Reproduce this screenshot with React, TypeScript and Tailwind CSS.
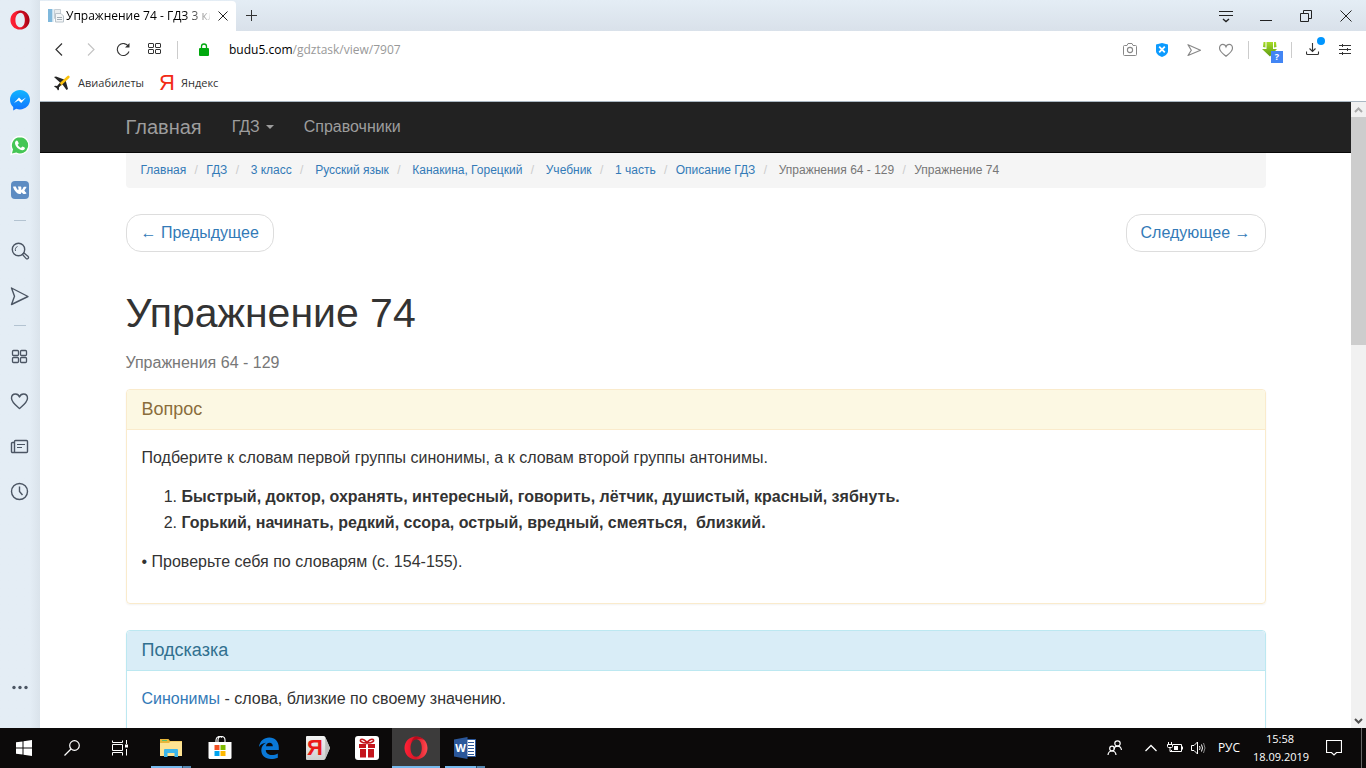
import type { ReactNode } from "react";

type IconProps = { w: number; h: number; children: ReactNode; className?: string };

function Icon({ w, h, children, className = "" }: IconProps) {
  return (
    <svg
      width={w}
      height={h}
      viewBox={`0 0 ${w} ${h}`}
      fill="none"
      stroke="currentColor"
      aria-hidden="true"
      className={`block shrink-0 ${className}`}
    >
      {children}
    </svg>
  );
}

function OperaLogo({ size, id, glossy = false }: { size: number; id: string; glossy?: boolean }) {
  return (
    <svg width={size} height={size} viewBox="0 0 24 24" aria-hidden="true" className="block">
      <defs>
        <linearGradient id={id} x1="0" y1="0" x2="1" y2="0">
          <stop offset="0" stopColor="#ff2136" />
          <stop offset="0.5" stopColor={glossy ? "#d81626" : "#f0182c"} />
          <stop offset="1" stopColor={glossy ? "#ff4a50" : "#a00012"} />
        </linearGradient>
      </defs>
      <path
        fillRule="evenodd"
        fill={`url(#${id})`}
        d="M12 0.5C5.4 0.5 0.500 5.600 0.500 12S5.400 23.500 12 23.500 23.500 18.400 23.500 12 18.600 0.500 12 0.500ZM12.300 3.200C15.700 3.200 17.800 7 17.800 12S15.700 20.800 12.300 20.800 6.500 17 6.500 12 8.900 3.200 12.300 3.200Z"
      />
      <path fill="#a30014" opacity="0.6" d="M12 0.500C15.500 0.500 18.600 2 20.600 4.300 18 2.900 15 2.600 12.300 3.200 10 3.600 8.300 5 7.300 7 8 3.500 9.500 1.200 12 0.500Z" />
    </svg>
  );
}

type Item = { label: string; icon: ReactNode };

const messengers: Item[] = [
  {
    label: "Messenger",
    icon: (
      <Icon w={20} h={21}>
        <defs>
          <linearGradient id="msg" x1="0" y1="0" x2="0" y2="1">
            <stop offset="0" stopColor="#10b5ff" />
            <stop offset="1" stopColor="#1173ff" />
          </linearGradient>
        </defs>
        <path
          fill="url(#msg)"
          stroke="none"
          d="M10 0C4.400 0 0 4.300 0 9.800c0 2.800 1.200 5.400 3.200 7.200V20.500l3-1.700c1.200.4 2.500.6 3.800.6 5.600 0 10-4.100 10-9.600S15.600 0 10 0Z"
        />
        <path fill="#fff" stroke="none" d="M4 13 9 7.500l2.700 2.700L16 7.500 11.200 13 8.500 10.400Z" />
      </Icon>
    ),
  },
  {
    label: "WhatsApp",
    icon: (
      <Icon w={20} h={21}>
        <path
          fill="#45c655"
          stroke="#fff"
          strokeWidth="1.300"
          d="M10 1.500a8.800 8.800 0 0 0-7.700 13L1 19.500l5.100-1.300A8.800 8.800 0 1 0 10 1.500Z"
        />
        <path
          fill="#fff"
          stroke="none"
          d="M7 5.500c-.6-.2-2 .8-2 2.500 0 3.300 4.200 7.300 7.400 7.300 1.500 0 2.800-1.200 2.500-2.300-.1-.5-2-1.500-2.500-1.500s-.9 1.300-1.400 1.300c-.9 0-3.300-2.200-3.300-3 0-.4 1-.8 1-1.400C8.700 7.900 7.600 5.700 7 5.500Z"
        />
      </Icon>
    ),
  },
  {
    label: "ВКонтакте",
    icon: (
      <Icon w={20} h={21}>
        <rect x="1" y="1" width="18" height="18" rx="4" fill="#5d8cc2" stroke="none" />
        <path
          fill="#fff"
          stroke="none"
          d="M9.600 14h.9c.5-.1.400-.500.500-1.100.2-1 1-.3 1.700.500.6.600.900.700 2.100.600 2 0 2-.5 1-1.700-.8-.9-1.600-1.500-1.300-2 .3-.6 1.800-2.400 1.900-3.100.1-.4-.1-.5-.5-.5h-1.800c-.9 0-.6 1.300-2 2.900-.5.500-.8.300-.8-.3V7.500c0-.7-.3-.9-1-.9H8.700c-.8 0-1 .4-.7.700.4.300.5.600.5 1.500 0 1-.1 1.300-.5 1.100C7.200 9.500 6.400 7.900 6 7c-.1-.3-.3-.4-.7-.4H3.600c-.5 0-.7.2-.5.700.8 2 3.200 6.700 6.500 6.700Z"
        />
      </Icon>
    ),
  },
];

const tools: Item[] = [
  {
    label: "Поиск",
    icon: (
      <Icon w={20} h={21}>
        <circle cx="8.500" cy="9.500" r="6.200" strokeWidth="1.400" />
        <path d="M5.500 11c-.6-1.800.1-3.800 2-4.500" />
        <path strokeWidth="1.300" d="m12.500 14.500 1.500-1.500 4.200 3.600a1.200 1.200 0 0 1 0 1.700l-.3.300a1.200 1.200 0 0 1-1.700 0Z" />
      </Icon>
    ),
  },
  {
    label: "Моя лента",
    icon: (
      <Icon w={20} h={21}>
        <path strokeWidth="1.400" strokeLinejoin="round" d="M1.500 3 18 11.500 1.500 19.500 4.500 11.300Z" />
      </Icon>
    ),
  },
];

const panels: Item[] = [
  {
    label: "Экспресс-панель",
    icon: (
      <Icon w={20} h={21}>
        <g strokeWidth="1.300">
          <rect x="2.500" y="5.500" width="6" height="5" rx="1" />
          <rect x="10.500" y="5.500" width="6" height="5" rx="1" />
          <rect x="2.500" y="12.500" width="6" height="5" rx="1" />
          <rect x="10.500" y="12.500" width="6" height="5" rx="1" />
        </g>
      </Icon>
    ),
  },
  {
    label: "Закладки",
    icon: (
      <Icon w={20} h={21}>
        <path
          strokeWidth="1.400"
          strokeLinejoin="round"
          d="M9.500 18.500C6 15.600 1.500 12.300 1.500 8.300 1.500 5.700 3.300 4 5.500 4c1.700 0 3.300 1 4 3 .7-2 2.300-3 4-3 2.200 0 4 1.700 4 4.300 0 4-4.500 7.300-8 10.200Z"
        />
      </Icon>
    ),
  },
  {
    label: "Новости",
    icon: (
      <Icon w={20} h={21}>
        <path strokeWidth="1.400" d="M4.500 17.500V6.500a1 1 0 0 1 1-1h11a1 1 0 0 1 1 1v10a1 1 0 0 1-1 1H2.500a1 1 0 0 1-1-1v-8a1 1 0 0 1 1-1h2" />
        <path strokeWidth="1.200" d="M7 9.500h8M7 12.500h5" />
      </Icon>
    ),
  },
  {
    label: "История",
    icon: (
      <Icon w={20} h={21}>
        <circle cx="9.500" cy="11.500" r="8" strokeWidth="1.400" />
        <path strokeWidth="1.400" d="M9.500 6.500v5l3 3.500" />
      </Icon>
    ),
  },
];

function SideButton({ item }: { item: Item }) {
  return (
    <button type="button" aria-label={item.label} className="flex h-[45px] w-full items-center justify-center text-[#4b5563]">
      {item.icon}
    </button>
  );
}

function SideRule() {
  return (
    <div className="flex h-[15px] w-full items-center justify-center">
      <span className="h-px w-3 bg-[#b3c3d1]" />
    </div>
  );
}

function Sidebar() {
  return (
    <aside className="flex w-10 shrink-0 flex-col items-center bg-linear-to-r from-[#e4edf5] from-75% to-[#dae3eb]">
      <button type="button" aria-label="Меню Opera" className="flex h-10 w-full items-center justify-center">
        <OperaLogo size={20} id="opera-side" />
      </button>
      <nav aria-label="Боковая панель" className="flex w-full flex-1 flex-col pt-[38px] pb-[18px]">
        {messengers.map((item) => (
          <SideButton key={item.label} item={item} />
        ))}
        <SideRule />
        {tools.map((item) => (
          <SideButton key={item.label} item={item} />
        ))}
        <SideRule />
        {panels.map((item) => (
          <SideButton key={item.label} item={item} />
        ))}
        <div className="mt-auto">
          <SideButton
            item={{
              label: "Настройка боковой панели",
              icon: (
                <Icon w={20} h={5}>
                  <g fill="currentColor" stroke="none">
                    <circle cx="4" cy="2.500" r="1.700" />
                    <circle cx="10" cy="2.500" r="1.700" />
                    <circle cx="16" cy="2.500" r="1.700" />
                  </g>
                </Icon>
              ),
            }}
          />
        </div>
      </nav>
    </aside>
  );
}

const windowControls: Item[] = [
  {
    label: "Меню вкладок",
    icon: (
      <Icon w={14} h={14}>
        <path d="M0 2.500h14M0 6.500h14" />
        <path d="m4 10 3 2.500 3-2.500" strokeWidth="1.400" />
      </Icon>
    ),
  },
  {
    label: "Свернуть",
    icon: (
      <Icon w={12} h={12}>
        <path d="M0 10.500h12" />
      </Icon>
    ),
  },
  {
    label: "Восстановить",
    icon: (
      <Icon w={12} h={12}>
        <path d="M.500 3.500h8v8h-8ZM3.500 3.500v-3h8v8h-3" />
      </Icon>
    ),
  },
  {
    label: "Закрыть",
    icon: (
      <Icon w={12} h={12}>
        <path d="m.500.500 11 11M11.500.500l-11 11" />
      </Icon>
    ),
  },
];

function TabBar() {
  return (
    <div className="flex h-[31px] items-stretch bg-linear-to-b from-[#e4edf5] to-[#d9e1ea]">
      <div className="mt-px flex w-[196px] items-center rounded-tr-sm bg-white pr-2 pl-2">
        <Icon w={16} h={16}>
          <path fill="#7fb8dc" stroke="none" d="M0 1h4v13H0Z" />
          <path fill="#c7e0ef" stroke="none" d="M4 1h1.500v13H4Z" />
          <path fill="#e9edef" stroke="#c6ced4" d="M6.500 1.500h6v9h-6Z" />
          <path fill="#f4f6f7" stroke="#b9c3ca" d="M7.500 5.500h5.500l2.500 2.500v6H7.500Z" />
          <path stroke="#a4afb7" d="M9 9.500h5M9 11.500h5" />
        </Icon>
        <span className="ml-[2px] flex-1 overflow-hidden bg-linear-to-r from-black from-80% to-[#dddddd] bg-clip-text text-[12px] leading-4 whitespace-nowrap text-transparent">
          Упражнение 74 - ГДЗ 3 класс
        </span>
        <button type="button" aria-label="Закрыть вкладку" className="ml-2 text-[#222]">
          <Icon w={10} h={10}>
            <path d="m.500.500 9 9M9.500.500l-9 9" />
          </Icon>
        </button>
      </div>
      <button type="button" aria-label="Новая вкладка" className="flex w-[31px] items-center justify-center text-[#333]">
        <Icon w={11} h={11}>
          <path d="M5.500 0v11M0 5.500h11" />
        </Icon>
      </button>
      <div className="ml-auto flex text-[#222]">
        {windowControls.map((item) => (
          <button key={item.label} type="button" aria-label={item.label} className="flex w-10 items-center justify-center">
            {item.icon}
          </button>
        ))}
      </div>
    </div>
  );
}

function ToolButton({ label, className = "", children }: { label: string; className?: string; children: ReactNode }) {
  return (
    <button type="button" aria-label={label} className={`flex h-8 w-8 shrink-0 items-center justify-center ${className}`}>
      {children}
    </button>
  );
}

function Toolbar() {
  return (
    <div className="flex h-[38px] items-center bg-white pr-[5px] pl-[3px] text-[#333]">
      <ToolButton label="Назад">
        <Icon w={14} h={14}>
          <path d="M10 .500 4 6.500l6 6" strokeWidth="1.200" />
        </Icon>
      </ToolButton>
      <ToolButton label="Вперёд" className="text-[#c4c4c4]">
        <Icon w={14} h={14}>
          <path d="m4 .500 6 6-6 6" strokeWidth="1.200" />
        </Icon>
      </ToolButton>
      <ToolButton label="Обновить">
        <Icon w={14} h={14}>
          <path d="M13 8.500A6 6 0 1 1 12.500 3.500" strokeWidth="1.100" />
          <path d="M13.500 0v4.500H9Z" fill="currentColor" stroke="none" />
        </Icon>
      </ToolButton>
      <ToolButton label="Экспресс-панель">
        <Icon w={14} h={14}>
          <rect x=".500" y=".500" width="5" height="4" rx=".500" />
          <rect x="7.500" y=".500" width="5" height="4" rx=".500" />
          <rect x=".500" y="6.500" width="5" height="4" rx=".500" />
          <rect x="7.500" y="6.500" width="5" height="4" rx=".500" />
        </Icon>
      </ToolButton>
      <span className="ml-1.5 h-[18px] w-px bg-[#ccc]" />
      <Icon w={12} h={14} className="ml-5 text-[#00a80e]">
        <rect x="1" y="5" width="10" height="8" rx="1" fill="currentColor" stroke="none" />
        <path d="M3.500 6V3.500a2.500 2.500 0 0 1 5 0V6" strokeWidth="1.300" />
      </Icon>
      <div className="ml-[19px] flex-1 truncate text-[12px] leading-4 text-black">
        budu5.com<span className="text-[#999]">/gdztask/view/7907</span>
      </div>
      <ToolButton label="Снимок страницы" className="text-[#888]">
        <Icon w={14} h={14}>
          <path d="M1.500 2.500h2.500l1-2h4l1 2h2.500a1 1 0 0 1 1 1v8a1 1 0 0 1-1 1h-11a1 1 0 0 1-1-1v-8a1 1 0 0 1 1-1Z" />
          <circle cx="7" cy="7" r="2.600" strokeWidth="1.100" />
        </Icon>
      </ToolButton>
      <ToolButton label="Блокировка рекламы">
        <Icon w={14} h={14}>
          <path fill="#0c9bff" stroke="none" d="M1 1.500 7 0l6 1.500v6.300C13 11 10 13 7 14 4 13 1 11 1 7.800Z" />
          <path stroke="#fff" strokeWidth="1.800" d="m4.200 3.700 5.600 5.600M9.800 3.700 4.200 9.300" />
        </Icon>
      </ToolButton>
      <ToolButton label="Отправить" className="text-[#888]">
        <Icon w={14} h={14}>
          <path d="M1 1.700 13.500 7.200 1 12.500 4.300 7.200Z" strokeWidth="1.200" strokeLinejoin="round" />
        </Icon>
      </ToolButton>
      <ToolButton label="В закладки" className="text-[#888]">
        <Icon w={14} h={14}>
          <path
            d="M7 13.300C4 10.800.500 8.500.500 5.200.500 3 2 1.300 3.800 1.300 5.200 1.300 6.500 2.200 7 3.700c.5-1.500 1.800-2.400 3.200-2.400 1.800 0 3.300 1.700 3.300 3.900C13.500 8.500 10 10.800 7 13.300Z"
            strokeWidth="1.200"
          />
        </Icon>
      </ToolButton>
      <span className="ml-1.5 h-[18px] w-px bg-[#ccc]" />
      <ToolButton label="Расширение загрузки" className="relative ml-[5px]">
        <Icon w={16} h={16}>
          <defs>
            <linearGradient id="green" x1="0" y1="0" x2="0" y2="1">
              <stop offset="0" stopColor="#a6dc28" />
              <stop offset="1" stopColor="#5d9a12" />
            </linearGradient>
          </defs>
          <path fill="url(#green)" stroke="none" d="M4.500 0h6.500v7h4L8 14.500 0 7h4.500ZM1.500 0h2v5.500L1 5ZM12 0h2l.5 5L12 5.500Z" />
        </Icon>
        <span className="absolute right-[3px] bottom-[3px] h-3 w-3 bg-[#4285f4] text-[9px] leading-3 font-bold text-white">?</span>
      </ToolButton>
      <span className="ml-[5px] h-[16px] w-px bg-[#ccc]" />
      <ToolButton label="Загрузки" className="relative ml-[5px]">
        <Icon w={14} h={14}>
          <path d="M6.500 0v8.500M3.500 5.500l3 3 3-3M.500 8.500v2a1 1 0 0 0 1 1h10a1 1 0 0 0 1-1v-2" strokeWidth="1.100" />
        </Icon>
        <span className="absolute top-[3px] right-1 h-2 w-2 rounded-full bg-[#0096ff]" />
      </ToolButton>
      <ToolButton label="Простая настройка">
        <Icon w={12} h={14}>
          <path d="M0 2.500h12M0 6.500h12M0 10.500h12M3.500 1v3M8.500 5v3M3.500 9v3" />
        </Icon>
      </ToolButton>
    </div>
  );
}

function Bookmarks() {
  return (
    <div className="flex h-[33px] items-center border-b border-[#aab7c2] bg-white pb-1 pl-[14px] text-[11px] leading-4 text-[#333]">
      <a href="#avia" className="flex items-center gap-2">
        <Icon w={16} h={16}>
          <path fill="#262626" stroke="none" d="M0 2 2 1.500 11.500 5 14 14 12.500 15 8.500 9.500 5 12 5 14.500 4 15.500 2.500 13 0 11.500 1 10.800 3.500 11 6 7.500Z" />
          <path stroke="#fbc20c" strokeWidth="2.600" strokeLinecap="round" d="M14.300 2 6.500 9.300" />
          <path stroke="#262626" strokeWidth="2" d="M6.500 9 3 12.500" />
        </Icon>
        Авиабилеты
      </a>
      <a href="#yandex" className="ml-[15px] flex items-center gap-2">
        <span className="w-[14px] text-center font-['Liberation_Sans_Narrow','Liberation_Sans',sans-serif] text-[22px] leading-4 text-[#f22a16]">Я</span>
        Яндекс
      </a>
    </div>
  );
}

type Crumb = { text: string; link: boolean; spaced: boolean };

const crumbs: Crumb[] = [
  { text: "Главная", link: true, spaced: false },
  { text: "ГДЗ", link: true, spaced: false },
  { text: "3 класс", link: true, spaced: true },
  { text: "Русский язык", link: true, spaced: true },
  { text: "Канакина, Горецкий", link: true, spaced: true },
  { text: "Учебник", link: true, spaced: true },
  { text: "1 часть", link: true, spaced: true },
  { text: "Описание ГДЗ", link: true, spaced: false },
  { text: "Упражнения 64 - 129", link: false, spaced: true },
  { text: "Упражнение 74", link: false, spaced: false },
];

function Breadcrumbs() {
  return (
    <ol className="rounded-b bg-[#f5f5f5] px-[15px] py-2 text-[12px] leading-[19px] text-[#777]">
      {crumbs.map((crumb, i) => (
        <li key={crumb.text} className="inline">
          {i > 0 && <span className="px-[5px] text-[#ccc]">/{"\u00a0"}</span>}
          {crumb.spaced && "\u00a0"}
          {crumb.link ? (
            <a href="#crumb" className="text-[#337ab7]">
              {crumb.text}
            </a>
          ) : (
            crumb.text
          )}{" "}
        </li>
      ))}
    </ol>
  );
}

function SiteNav() {
  return (
    <nav className="border-b border-[#080808] bg-[#222]">
      <div className="mx-auto flex h-[50px] max-w-[1140px] items-center gap-[30px] text-[#9d9d9d]">
        <a href="#home" className="text-[20px] leading-[26px]">
          Главная
        </a>
        <a href="#gdz" className="flex items-center gap-1.5">
          ГДЗ
          <Icon w={8} h={4}>
            <path d="M0 0h8L4 4Z" fill="currentColor" stroke="none" />
          </Icon>
        </a>
        <a href="#ref">Справочники</a>
      </div>
    </nav>
  );
}

function Page() {
  return (
    <div className="min-w-0 flex-1 overflow-hidden bg-white font-['Liberation_Sans',Arial,sans-serif] text-[16px] leading-[26px] text-[#333]">
      <SiteNav />
      <main className="mx-auto max-w-[1140px]">
        <Breadcrumbs />
        <div className="mt-[26px] flex justify-between text-[#337ab7]">
          <a href="#prev" className="rounded-[15px] border border-[#ddd] px-[14px] py-[5px]">
            ← Предыдущее
          </a>
          <a href="#next" className="rounded-[15px] border border-[#ddd] px-[14px] py-[5px]">
            Следующее →
          </a>
        </div>
        <h1 className="mt-[39px] mb-[14px] text-[41px] leading-[45px]">Упражнение 74</h1>
        <p className="mb-[13px] text-[#777]">Упражнения 64 - 129</p>

        <section className="mb-[26px] rounded border border-[#faebcc] shadow-xs">
          <h2 className="rounded-t border-b border-[#faebcc] bg-[#fcf8e3] px-[15px] py-[10px] text-[18px] leading-[19px] text-[#8a6d3b]">
            Вопрос
          </h2>
          <div className="p-[15px]">
            <p className="mb-[13px]">Подберите к словам первой группы синонимы, а к словам второй группы антонимы.</p>
            <ol className="mb-[13px] list-decimal pl-10">
              <li>
                <b>Быстрый, доктор, охранять, интересный, говорить, лётчик, душистый, красный, зябнуть.</b>
              </li>
              <li>
                <b>Горький, начинать, редкий, ссора, острый, вредный, смеяться, {"\u00a0"}близкий.</b>
              </li>
            </ol>
            <p className="mb-[13px]">• Проверьте себя по словарям (с. 154-155).</p>
          </div>
        </section>

        <section className="mb-[26px] rounded border border-[#bce8f1] shadow-xs">
          <h2 className="rounded-t border-b border-[#bce8f1] bg-[#d9edf7] px-[15px] py-[10px] text-[18px] leading-[19px] text-[#31708f]">
            Подсказка
          </h2>
          <div className="p-[15px]">
            <p className="mb-[13px]">
              <a href="#synonyms" className="text-[#337ab7]">
                Синонимы
              </a>{" "}
              - слова, близкие по своему значению.
            </p>
          </div>
        </section>
      </main>
    </div>
  );
}

function PageScrollbar() {
  return (
    <div className="flex w-[15px] shrink-0 flex-col items-center bg-[#f1f1f1]">
      <div className="flex h-[15px] items-center text-[#aaa]">
        <Icon w={9} h={6}>
          <path d="M1 5 4.500 1.500 8 5" strokeWidth="2" />
        </Icon>
      </div>
      <div className="h-[228px] w-full bg-[#cdcdcd]" />
      <div className="mt-auto flex h-[15px] items-center text-[#505050]">
        <Icon w={9} h={6}>
          <path d="M1 1 4.500 4.500 8 1" strokeWidth="2" />
        </Icon>
      </div>
    </div>
  );
}

type Task = Item & { state?: "open" | "active" };

const systemTasks: Task[] = [
  {
    label: "Пуск",
    icon: (
      <Icon w={16} h={16}>
        <path fill="#fff" stroke="none" d="M0 2.300 6.500 1.400V7.500H0ZM7.500 1.300 16 0V7.500H7.500ZM0 8.500H6.500V14.600L0 13.700ZM7.500 8.500H16V16L7.500 14.800Z" />
      </Icon>
    ),
  },
  {
    label: "Поиск Windows",
    icon: (
      <Icon w={16} h={16}>
        <circle cx="10.500" cy="5.500" r="4.800" strokeWidth="1.200" />
        <path strokeWidth="1.300" d="M7 9 .500 15.500" />
      </Icon>
    ),
  },
  {
    label: "Представление задач",
    icon: (
      <Icon w={16} h={16}>
        <path d="M.500 4.500h10v6H.500ZM.500.500v2h10v-2M.500 15.500v-3h10v3M14.500 0v4M14.500 9v6.500" />
        <rect x="13" y="4.500" width="3" height="3" fill="#fff" stroke="none" />
      </Icon>
    ),
  },
];

const appTasks: Task[] = [
  {
    label: "Проводник",
    state: "open",
    icon: (
      <Icon w={22} h={18}>
        <path fill="#e8b63a" stroke="none" d="M0 0h8.500l1.500 2H22v15H0Z" />
        <path fill="#fee392" stroke="none" d="M0 4h9l1.500-1.500H22V17H0Z" />
        <path stroke="#5cbf6a" d="M2 1.500h5" />
        <path fill="#3cb6ea" stroke="none" d="M4 11a1 1 0 0 1 1-1h12a1 1 0 0 1 1 1v7h-3.500v-4h-7v4H4Z" />
      </Icon>
    ),
  },
  {
    label: "Магазин",
    icon: (
      <Icon w={24} h={24}>
        <path stroke="#fff" strokeWidth="1.100" d="M8 6V4a3.500 3.500 0 0 1 6-2.500M10 6V4a3.500 3.500 0 0 1 7 0v2" />
        <path fill="#fff" stroke="none" d="M.500 6h23v15.500a1.500 1.500 0 0 1-1.500 1.500H2A1.500 1.500 0 0 1 .500 21.500Z" />
        <g stroke="none">
          <path fill="#f25022" d="M6.500 9h5v5h-5Z" />
          <path fill="#7fba00" d="M12.500 9h5v5h-5Z" />
          <path fill="#00a4ef" d="M6.500 15h5v5h-5Z" />
          <path fill="#ffb900" d="M12.500 15h5v5h-5Z" />
        </g>
      </Icon>
    ),
  },
  {
    label: "Microsoft Edge",
    icon: (
      <Icon w={20} h={22}>
        <path
          fill="#0a78d7"
          stroke="none"
          d="M0 10C.700 4 5 .500 10.300.500 16 .500 19.800 4.500 19.800 10.500V13H6.800c0 3.500 3 5 6 5 2.200 0 4.200-.5 6-1.500v4.200c-2 .9-4.400 1.300-6.800 1.300-6 0-9.700-3.500-9.700-8.700C2.300 9.700 4.200 7.200 7 5.800 4 6 1.500 7.600 0 10ZM7 9.300h6.800C13.800 7.300 12.600 5.800 10.500 5.800 8.500 5.800 7.300 7.300 7 9.300Z"
        />
      </Icon>
    ),
  },
  {
    label: "Яндекс Браузер",
    icon: (
      <span className="relative flex">
        <Icon w={24} h={24}>
          <defs>
            <linearGradient id="silver" x1="0" y1="0" x2="0" y2="1">
              <stop offset="0" stopColor="#f4f4f4" />
              <stop offset="1" stopColor="#cfcfcf" />
            </linearGradient>
          </defs>
          <path fill="url(#silver)" stroke="none" d="M1 0h16.500a2 2 0 0 1 1.700 1L24 12l-4.800 11a2 2 0 0 1-1.700 1H1a1 1 0 0 1-1-1V1A1 1 0 0 1 1 0Z" />
          <path fill="#bdbdbd" stroke="none" d="m19.200 1 4.800 11-4.800 11Z" />
        </Icon>
        <span className="absolute inset-y-0 left-0 w-[18px] text-center font-['Liberation_Sans_Narrow','Liberation_Sans',sans-serif] text-[22px] leading-6 font-bold text-[#ea1a1a]">Я</span>
      </span>
    ),
  },
  {
    label: "Подарки",
    icon: (
      <Icon w={24} h={24}>
        <rect x="0" y="0" width="24" height="24" rx="3" fill="#fff" stroke="none" />
        <path fill="#c4151c" stroke="none" d="M4 8h7v4H4ZM13 8h7v4h-7ZM5 13h6v8.500H5ZM13 13h6v8.500h-6Z" />
        <path stroke="#c4151c" strokeWidth="1.600" d="M12 7C11 4.500 7.500 2.500 6 3.500S5.500 7 12 7 19.500 4.500 18 3.500 13 4.500 12 7Z" />
      </Icon>
    ),
  },
  { label: "Opera", state: "active", icon: <OperaLogo size={24} id="opera-task" glossy /> },
  {
    label: "Word",
    state: "open",
    icon: (
      <span className="relative flex">
        <Icon w={22} h={22}>
          <path fill="#fff" stroke="#2b579a" d="M12 2.500h9.500v17H12Z" />
          <path stroke="#2b579a" d="M14 5.500h6M14 8.500h6M14 11.500h6M14 14.500h6M14 17.500h6" />
          <path fill="#2b579a" stroke="none" d="M0 2.500 13.500 0v22L0 19.500Z" />
        </Icon>
        <span className="absolute inset-y-0 left-0 w-[13px] text-center text-[11px] leading-[22px] font-bold text-white">W</span>
      </span>
    ),
  },
];

function TaskButton({ task }: { task: Task }) {
  return (
    <button
      type="button"
      aria-label={task.label}
      className={`relative flex h-10 w-12 items-center justify-center ${task.state === "active" ? "bg-[#3c3b3b]" : ""}`}
    >
      {task.icon}
      {task.state === "active" && <span className="absolute inset-x-0 bottom-0 h-0.5 bg-[#76b9ed]" />}
      {task.state === "open" && (
        <span className="absolute inset-x-1 bottom-0 flex h-0.5">
          <span className="flex-1 bg-[#76b9ed]" />
          <span className="w-px bg-[#2f4b61]" />
          <span className="w-2 bg-[#5487b0]" />
        </span>
      )}
    </button>
  );
}

function Taskbar() {
  return (
    <footer className="flex h-10 shrink-0 items-center bg-[#0c0a0a] text-white">
      <div className="flex">
        {systemTasks.map((task) => (
          <TaskButton key={task.label} task={task} />
        ))}
      </div>
      <div className="ml-[3px] flex gap-px">
        {appTasks.map((task) => (
          <TaskButton key={task.label} task={task} />
        ))}
      </div>
      <div className="ml-auto flex h-full items-center">
        <button type="button" aria-label="Люди" className="mr-3 flex w-6 justify-center">
          <Icon w={16} h={16}>
            <g strokeWidth="1.200">
              <circle cx="10.500" cy="3.500" r="2.700" />
              <path d="M7 9c.5-2 2-2.800 3.500-2.800S14 7.500 14.500 10" />
              <circle cx="5" cy="8.500" r="2.300" />
              <path d="M1 15c.3-2.800 1.800-4 4-4s3.700 1.200 4 4" />
            </g>
          </Icon>
        </button>
        <button type="button" aria-label="Скрытые значки" className="flex w-6 justify-center">
          <Icon w={12} h={8}>
            <path d="m.500 7 5.500-5.500L11.500 7" strokeWidth="1.300" />
          </Icon>
        </button>
        <button type="button" aria-label="Батарея" className="flex w-6 justify-center">
          <Icon w={16} h={12}>
            <path d="M6 2.500h8.500v7h-10V8M15.500 4.500v3" />
            <path d="M7 4h4v4H7Z" fill="currentColor" stroke="none" />
            <path d="M1.500 0v2M4.500 0v2M.500 2.500h5v2a1 1 0 0 1-1 1h-3a1 1 0 0 1-1-1ZM3 5.500v4h2" />
          </Icon>
        </button>
        <button type="button" aria-label="Громкость" className="flex w-6 justify-center">
          <Icon w={16} h={14}>
            <path d="M.500 4.500h2.500l3.500-3.500v12L3 9.500H.500Z" />
            <path d="M8.500 5q1.200 2 0 4M10.500 3.500q2 3.500 0 7" />
            <path d="M12.500 2q3 5 0 10" stroke="#888" />
          </Icon>
        </button>
        <button type="button" className="mr-2 ml-[2px] w-8 text-center text-[12px] leading-4">
          РУС
        </button>
        <div className="w-[54px] text-center text-[11px] leading-[18px] whitespace-nowrap">
          <div>15:58</div>
          <div>18.09.2019</div>
        </div>
        <button type="button" aria-label="Уведомления" className="flex w-[54px] justify-center">
          <Icon w={16} h={16}>
            <path d="M.500.500h15v12h-5L8 15l-2.500-2.500h-5Z" strokeWidth="1.200" />
          </Icon>
        </button>
        <span className="h-full w-[5px] border-l border-[#666]" />
      </div>
    </footer>
  );
}

export default function App() {
  return (
    <div className="flex h-screen flex-col overflow-hidden font-['Open_Sans','Noto_Sans',sans-serif]">
      <div className="flex min-h-0 flex-1">
        <Sidebar />
        <div className="flex min-w-0 flex-1 flex-col">
          <TabBar />
          <Toolbar />
          <Bookmarks />
          <div className="flex min-h-0 flex-1">
            <Page />
            <PageScrollbar />
          </div>
        </div>
      </div>
      <Taskbar />
    </div>
  );
}
